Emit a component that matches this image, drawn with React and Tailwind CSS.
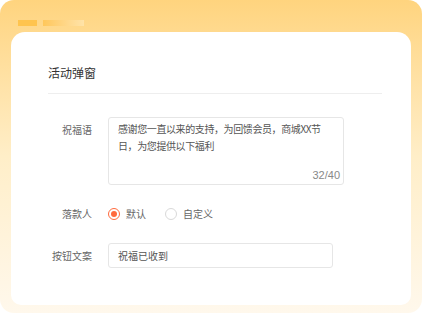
import { useState } from "react";

const font = { fontFamily: '"Noto Sans CJK SC", "Noto Sans", sans-serif' };

function Radio({ checked, label, onClick }) {
  return (
    <button onClick={onClick} className="flex items-center gap-[6px]">
      <span
        className={
          "w-[12px] h-[12px] rounded-full border flex items-center justify-center bg-white " +
          (checked ? "border-[#ff6a3d]" : "border-[#d9d9d9]")
        }
      >
        {checked && <span className="w-[6px] h-[6px] rounded-full bg-[#ff6a3d]" />}
      </span>
      <span className="text-[10px] leading-[14px] text-[#666]">{label}</span>
    </button>
  );
}

export default function App() {
  const [signer, setSigner] = useState("default");

  return (
    <div
      style={font}
      className="w-[422px] h-[313px] rounded-[14px] overflow-hidden bg-gradient-to-b from-[#ffd47e] via-[#ffeec8] to-[#fff8ec] flex flex-col"
    >
      {/* Top tabs */}
      <div className="flex items-center gap-[6px] pl-[18px] pt-[13px] h-[32px] shrink-0">
        <div className="w-[19px] h-[6px] bg-[#ffc44e]" />
        <div className="w-[41px] h-[6px] bg-gradient-to-r from-[#ffc75a] to-[#ffe3a8]" />
      </div>

      {/* Card */}
      <div className="mx-[11px] h-[273px] bg-white rounded-t-[14px] rounded-b-[10px] pl-[37px] pr-[29px] pt-[32px]">
        <h1 className="text-[12px] leading-[18px] text-[#333]">活动弹窗</h1>
        <div className="mt-[11px] border-t border-[#eeeeee]" />

        <div className="mt-[23px] flex flex-col gap-[19px]">
          {/* Greeting */}
          <div className="flex">
            <div className="w-[44px] text-right text-[10px] leading-[17px] pt-[4px] text-[#666] shrink-0">
              祝福语
            </div>
            <div className="relative ml-[16px] w-[236px] h-[68px] border border-[#e6e6e6] rounded-[3px] pl-[9px] pr-[6px] pt-[2px]">
              <p className="text-[10px] leading-[17px] tracking-[-0.4px] text-[#555] whitespace-nowrap">
                感谢您一直以来的支持，为回馈会员，商城XX节
                <br />
                日，为您提供以下福利
              </p>
              <span
                className="absolute right-[3px] bottom-[2px] text-[11px] leading-[14px] text-[#888]"
                style={{ fontFamily: '"Liberation Sans", sans-serif' }}
              >
                32/40
              </span>
            </div>
          </div>

          {/* Signer */}
          <div className="flex items-center h-[20px]">
            <div className="w-[44px] text-right text-[10px] leading-[14px] text-[#666] shrink-0">
              落款人
            </div>
            <div className="ml-[16px] flex items-center gap-[19px]">
              <Radio
                checked={signer === "default"}
                label="默认"
                onClick={() => setSigner("default")}
              />
              <Radio
                checked={signer === "custom"}
                label="自定义"
                onClick={() => setSigner("custom")}
              />
            </div>
          </div>

          {/* Button text */}
          <div className="flex items-center">
            <div className="w-[44px] text-right text-[10px] leading-[14px] text-[#666] shrink-0">
              按钮文案
            </div>
            <div className="ml-[16px] w-[225px] h-[25px] border border-[#e6e6e6] rounded-[3px] pl-[9px] flex items-center">
              <span className="text-[10px] leading-[14px] text-[#555]">祝福已收到</span>
            </div>
          </div>
        </div>
      </div>
    </div>
  );
}
